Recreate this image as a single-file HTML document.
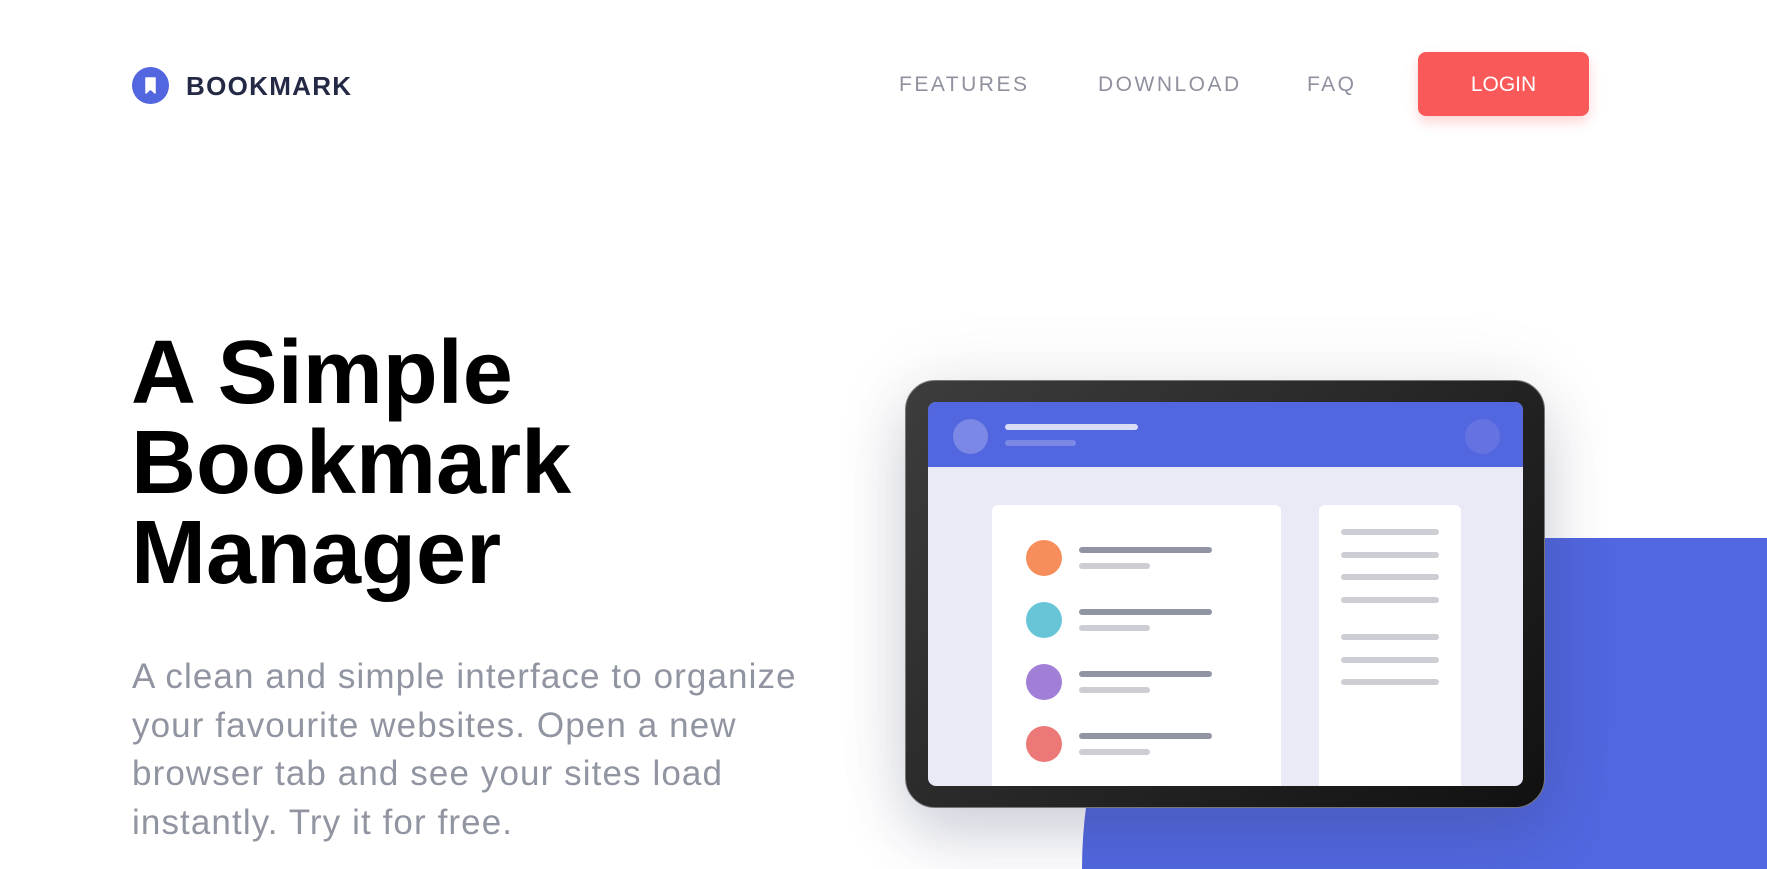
<!DOCTYPE html>
<html><head><meta charset="utf-8"><style>
*{margin:0;padding:0;box-sizing:border-box}
html,body{width:1767px;height:869px;overflow:hidden}
body{background:#fff;font-family:"Liberation Sans",sans-serif;position:relative}
.a{position:absolute}
.nav{color:#8f919e;font-size:21px;letter-spacing:2.5px;top:73px}
.l{position:absolute;border-radius:3px}
</style></head><body>
<div class="a" style="left:0;top:0;width:1767px;height:869px;overflow:hidden">
<div class="a" style="left:1082px;top:538px;width:700px;height:331px;background:#5267df;border-top-left-radius:360px 520px"></div>
</div>
<div class="a" style="left:132px;top:67px;width:37px;height:37px;border-radius:50%;background:#5267df"></div>
<svg class="a" style="left:132px;top:67px" width="37" height="37" viewBox="0 0 37 37"><path d="M14 11h9v15l-4.5-4-4.5 4z" fill="#fff" stroke="#fff" stroke-width="1.5" stroke-linejoin="round"/></svg>
<div class="a" style="left:186px;top:71px;font-size:26px;font-weight:bold;color:#242a45;letter-spacing:1.3px">BOOKMARK</div>
<div class="a nav" style="left:899px">FEATURES</div>
<div class="a nav" style="left:1098px">DOWNLOAD</div>
<div class="a nav" style="left:1307px">FAQ</div>
<div class="a" style="left:1418px;top:52px;width:171px;height:64px;background:#fa5959;border-radius:8px;box-shadow:0 6px 12px rgba(250,89,89,.25);color:#fff;font-size:21px;text-align:center;line-height:66px">LOGIN</div>
<div class="a" style="left:131px;top:328px;font-size:90px;font-weight:bold;line-height:90px;color:#000">A Simple<br>Bookmark<br>Manager</div>
<div class="a" style="left:132px;top:653px;font-size:35px;line-height:48.5px;color:#9194a1;width:850px;letter-spacing:1.1px">A clean and simple interface to organize<br>your favourite websites. Open a new<br>browser tab and see your sites load<br>instantly. Try it for free.</div>
<div class="a" style="left:905px;top:380px;width:640px;height:428px;border-radius:30px;background:linear-gradient(135deg,#3d3d3d,#222 60%,#111);box-shadow:0 30px 60px rgba(60,70,120,.2),0 0 80px rgba(0,0,0,.08);border:1px solid #777"></div>
<div class="a" style="left:928px;top:402px;width:595px;height:384px;background:#e9eaf6;border-radius:8px;overflow:hidden">
<div class="a" style="left:0;top:0;width:595px;height:65px;background:#5267df"></div>
<div class="a" style="left:25px;top:17px;width:35px;height:35px;border-radius:50%;background:#7b88e6"></div>
<div class="l" style="left:77px;top:22px;width:133px;height:6px;background:#d8dcf6"></div>
<div class="l" style="left:77px;top:38px;width:71px;height:6px;background:#7b88e6"></div>
<div class="a" style="left:537px;top:17px;width:35px;height:35px;border-radius:50%;background:#6573e2"></div>
<div class="a" style="left:64px;top:103px;width:289px;height:300px;background:#fff;border-radius:6px"></div>
<div class="a" style="left:391px;top:103px;width:142px;height:300px;background:#fff;border-radius:6px"></div>
</div>
<div class="a" style="left:1026px;top:540px;width:36px;height:36px;border-radius:50%;background:#f78d5b"></div>
<div class="a" style="left:1026px;top:602px;width:36px;height:36px;border-radius:50%;background:#67c5d7"></div>
<div class="a" style="left:1026px;top:664px;width:36px;height:36px;border-radius:50%;background:#a27fd6"></div>
<div class="a" style="left:1026px;top:726px;width:36px;height:36px;border-radius:50%;background:#ec7878"></div>
<div class="l" style="left:1079px;top:547px;width:133px;height:6px;background:#9195a3"></div><div class="l" style="left:1079px;top:563px;width:71px;height:6px;background:#cdced4"></div>
<div class="l" style="left:1079px;top:609px;width:133px;height:6px;background:#9195a3"></div><div class="l" style="left:1079px;top:625px;width:71px;height:6px;background:#cdced4"></div>
<div class="l" style="left:1079px;top:671px;width:133px;height:6px;background:#9195a3"></div><div class="l" style="left:1079px;top:687px;width:71px;height:6px;background:#cdced4"></div>
<div class="l" style="left:1079px;top:733px;width:133px;height:6px;background:#9195a3"></div><div class="l" style="left:1079px;top:749px;width:71px;height:6px;background:#cdced4"></div>
<div class="l" style="left:1341px;top:529px;width:98px;height:6px;background:#cdced4"></div>
<div class="l" style="left:1341px;top:552px;width:98px;height:6px;background:#cdced4"></div>
<div class="l" style="left:1341px;top:574px;width:98px;height:6px;background:#cdced4"></div>
<div class="l" style="left:1341px;top:597px;width:98px;height:6px;background:#cdced4"></div>
<div class="l" style="left:1341px;top:634px;width:98px;height:6px;background:#cdced4"></div>
<div class="l" style="left:1341px;top:657px;width:98px;height:6px;background:#cdced4"></div>
<div class="l" style="left:1341px;top:679px;width:98px;height:6px;background:#cdced4"></div>
</body></html>
